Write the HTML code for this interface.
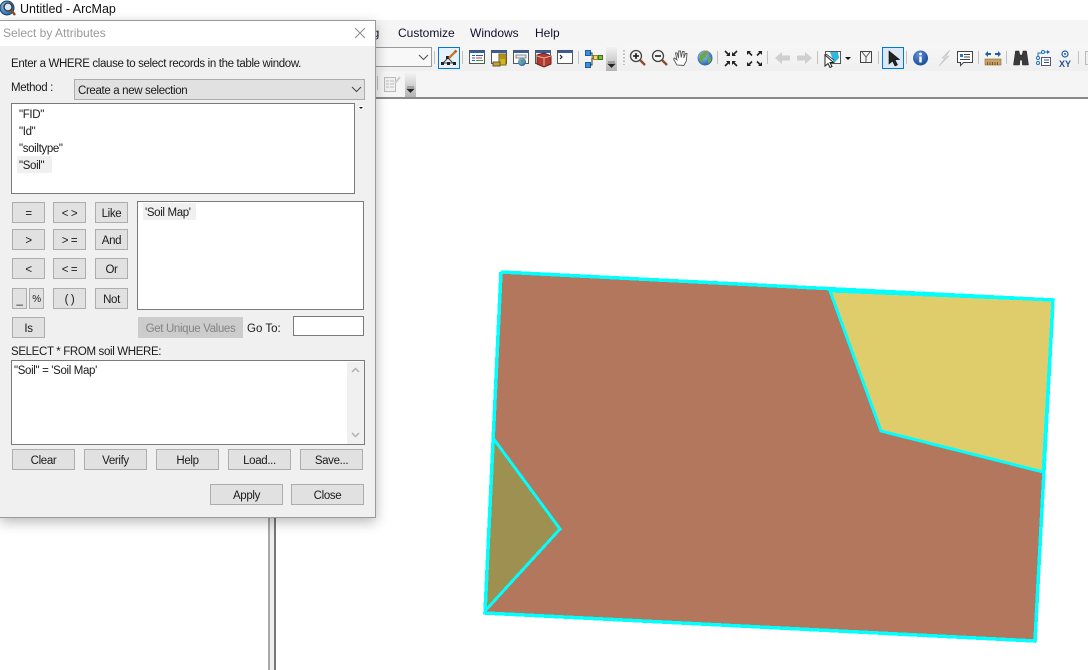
<!DOCTYPE html>
<html><head><meta charset="utf-8"><style>
html,body{margin:0;padding:0;background:#fff}
#p{position:relative;width:1088px;height:670px;overflow:hidden;background:#fff;font-family:"Liberation Sans",sans-serif;font-size:11.5px;letter-spacing:-.35px;color:#1a1a1a}
.t{position:absolute;white-space:pre;line-height:14px;transform:translateY(1px)}
.n{font-size:12px;letter-spacing:0;transform:none}
.b{position:absolute;box-sizing:border-box;padding-top:2px;background:#e1e1e1;border:1px solid #adadad;display:flex;align-items:center;justify-content:center;white-space:pre;line-height:14px}
.w{position:absolute;box-sizing:border-box;background:#fff;border:1px solid #7a7a7a}
.r{position:absolute}
svg{position:absolute;left:0;top:0}
</style></head><body><div id="p">

<!-- app chrome -->
<div class="r" style="left:0;top:20px;width:1088px;height:77px;background:#f5f5f5"></div>
<div class="r" style="left:380px;top:46px;width:708px;height:25px;background:linear-gradient(#f6f6f6,#efefef)"></div>
<div class="r" style="left:0;top:97px;width:1088px;height:2px;background:#8a8a8a"></div>
<div class="t n" style="left:20px;top:2px;font-size:12.5px;color:#111">Untitled - ArcMap</div>
<div class="t n" style="left:398px;top:26px;color:#101030">Customize</div>
<div class="t n" style="left:470px;top:26px;color:#101030">Windows</div>
<div class="t n" style="left:535px;top:26px;color:#101030">Help</div>
<div class="t n" style="left:366px;top:26px;color:#101030">ng</div>
<div class="r" style="left:370px;top:47px;width:62px;height:20px;box-sizing:border-box;border:1px solid #9a9a9a;border-left:0;background:#f8f8f8"></div>

<!-- map -->
<svg width="1088" height="670" viewBox="0 0 1088 670" shape-rendering="crispEdges">
<polygon points="501,272 1053,300 1035,641 485,613" fill="#b2775d"/>
<polygon points="830,291 1053,300 1043,472 881,431" fill="#dfcd6c" stroke="#00ffff" stroke-width="3"/>
<polygon points="493,438 560,529 485,611" fill="#9e9051" stroke="#00ffff" stroke-width="3"/>
<polyline points="501,272 1053,300 1035,641 485,613 501,272" fill="none" stroke="#00ffff" stroke-width="3.500"/>
</svg>

<!-- splitter -->
<div class="r" style="left:268px;top:510px;width:8px;height:160px;box-sizing:border-box;background:#eeeef0;border-left:2px solid #a8a8a8;border-right:2px solid #777"></div>

<!-- toolbar icons -->
<svg width="1088" height="100" viewBox="0 0 1088 100">
<defs>
<radialGradient id="gl" cx=".4" cy=".35" r=".7"><stop offset="0" stop-color="#9cc8ee"/><stop offset="1" stop-color="#1d5fa5"/></radialGradient>
<radialGradient id="inf" cx=".4" cy=".3" r=".8"><stop offset="0" stop-color="#5f92d8"/><stop offset="1" stop-color="#123f90"/></radialGradient>
<linearGradient id="ov" x1="0" y1="0" x2="0" y2="1"><stop offset="0" stop-color="#f2f2f2"/><stop offset="1" stop-color="#b4b4b4"/></linearGradient>
</defs>
<!-- app icon -->
<circle cx="7" cy="8" r="7" fill="url(#gl)" stroke="#16406c"/>
<path d="M3 6l4-3 3 2-2 4-3 1z" fill="#5aa04a"/>
<circle cx="8" cy="7" r="4" fill="#d7e8f4" stroke="#333" stroke-width="1.3"/>
<path d="M11 10l4 5" stroke="#8a4a1e" stroke-width="2.4"/>
<!-- combo chevron -->
<path d="M419 55l4.500 4.500 4.500-4.500" fill="none" stroke="#555" stroke-width="1.100"/>
<!-- separators -->
<g stroke="#c2c2c2" stroke-width="1">
<path d="M434.500 51v13M462.500 51v13M578.500 51v13M717.500 51v13M767.500 51v13M817.500 51v13M878.500 51v13M906.500 51v13M978.500 51v13M1006.500 51v13M1078.500 51v13M377.500 76v14"/>
</g>
<!-- edit tool -->
<rect x="438.500" y="47.500" width="21" height="21" fill="#e5f1fb" stroke="#0078d7"/>
<path d="M443 63l5-5 5 5M443 63h11" fill="none" stroke="#444"/>
<g fill="#222"><rect x="441" y="62" width="3" height="3"/><rect x="447" y="62" width="3" height="3"/><rect x="453" y="62" width="3" height="3"/><rect x="446" y="56" width="3" height="3"/></g>
<path d="M449 58l7-7" stroke="#c77b30" stroke-width="2.400"/><path d="M455 52l1.500-1.500" stroke="#d94040" stroke-width="2.400"/>
<!-- window icons -->
<g fill="#fff" stroke="#555"><rect x="469.500" y="50.500" width="15" height="13"/><rect x="491.500" y="50.500" width="15" height="13"/><rect x="513.500" y="50.500" width="15" height="13"/><rect x="535.500" y="50.500" width="15" height="13"/><rect x="557.500" y="50.500" width="15" height="13"/></g>
<g fill="#2f5fb0"><rect x="470" y="51" width="15" height="2"/><rect x="492" y="51" width="15" height="2"/><rect x="514" y="51" width="15" height="2"/><rect x="536" y="51" width="15" height="2"/><rect x="558" y="51" width="15" height="2"/></g>
<path d="M472 55.500h3M472 58h3M472 60.500h3" stroke="#1a5fc0"/><path d="M476 55.500h7" stroke="#1a5fc0"/><path d="M476 58h6" stroke="#d03030"/><path d="M476 60.500h7" stroke="#2ea04a"/>
<rect x="499" y="54" width="7" height="11" fill="#d8b21c" stroke="#7a6510"/><path d="M493 62h7v4h-7z" fill="#c9a51a" stroke="#555"/><path d="M500 56h5M500 58h5" stroke="#8a7010"/>
<rect x="516" y="55" width="10" height="3" fill="#e8e8e8" stroke="#888"/><circle cx="522" cy="62" r="4" fill="url(#gl)"/><path d="M520 61l2-2 2 2-2 2z" fill="#5aa04a"/>
<path d="M537 55l7-2 7 3v8l-7 3-7-3z" fill="#b23a30" stroke="#6a1f18"/><path d="M537 56l7 2 7-2M544 58v8" stroke="#e8b0a0" fill="none"/>
<path d="M560 55l2 2-2 2" fill="none" stroke="#222" stroke-width="1.200"/>
<!-- model builder -->
<rect x="585.500" y="50.500" width="5" height="5" fill="#3a8ee0" stroke="#1a5fa0"/><rect x="585.500" y="62.500" width="5" height="5" fill="#3a8ee0" stroke="#1a5fa0"/>
<rect x="593.500" y="55.500" width="4" height="4" fill="#f0d870" stroke="#a08a20"/><rect x="598.500" y="55.500" width="4" height="4" fill="#7ac040" stroke="#3a7020"/>
<path d="M590 53h2v3h1.500M590 65h2v-7h1.500" fill="none" stroke="#333"/>
<!-- overflow -->
<rect x="606" y="47" width="11" height="24" fill="url(#ov)"/>
<path d="M608 62h7M608 64h7l-3.500 3.500z" fill="#222" stroke="#222" stroke-width=".6"/>
<!-- grip -->
<path d="M624 50v15" stroke="#aaa" stroke-width="1.500" stroke-dasharray="1.500 2"/>
<!-- zoom in/out -->
<circle cx="636" cy="56" r="5.500" fill="#f4f4f4" stroke="#444" stroke-width="1.300"/><path d="M633 56h6M636 53v6" stroke="#111" stroke-width="1.500"/><path d="M640 60l5 5" stroke="#8a4a28" stroke-width="2.300"/>
<circle cx="658" cy="56" r="5.500" fill="#f4f4f4" stroke="#444" stroke-width="1.300"/><path d="M655 56h6" stroke="#111" stroke-width="1.500"/><path d="M662 60l5 5" stroke="#8a4a28" stroke-width="2.300"/>
<!-- hand -->
<path d="M677 65l-3.500-6 1-1 2.500 2-1.500-7h1.700l1.300 5 .3-7h1.700l.7 6.500 1.300-6h1.600l-.3 6.500 1.700-4.500h1.500l-.7 7.500-2.500 4.500z" fill="#fff" stroke="#555" stroke-width=".9"/>
<!-- globe -->
<circle cx="705" cy="58" r="7.500" fill="url(#gl)"/><path d="M700 55l4-3 3 1-1 4-3 2-1 4-2-3zM708 58l3-1 0 4-3 3z" fill="#6aaa3a"/><path d="M704 52l3 1 3-.5-3-2z" fill="#b08a3a"/>
<!-- fixed zoom -->
<g fill="#222"><path d="M725 51l4.500 4.500M737 51l-4.500 4.500M725 66l4.500-4.500M737 66l-4.500-4.500" stroke="#222" stroke-width="1.600"/><path d="M730 52v4h-4zM732 52v4h4zM730 65v-4h-4zM732 65v-4h4z"/></g>
<g fill="#222"><path d="M752 55.500l-3-3M757 55.500l3-3M752 61.500l-3 3M757 61.500l3 3" stroke="#222" stroke-width="1.600"/><path d="M747 51h4l-4 4zM762 51h-4l4 4zM747 66h4l-4-4zM762 66h-4l4-4z"/></g>
<!-- arrows -->
<path d="M775 58l7-6v3.500h8v5h-8v3.500z" fill="#cfcfcf"/>
<path d="M812 58l-7-6v3.500h-8v5h8v3.500z" fill="#cfcfcf"/>
<!-- select features -->
<rect x="825.500" y="51.500" width="15" height="12" fill="#fff" stroke="#555"/><path d="M830 52h8l1 6-5 5z" fill="#2fb8dc"/><path d="M826 54l8 6" stroke="#444"/>
<path d="M825 55v11l3-2.500 2 4 2-1-2-4h3.500z" fill="#fff" stroke="#222"/>
<path d="M845 57h6l-3 3z" fill="#111"/>
<!-- clear sel -->
<rect x="860.500" y="51.500" width="11" height="11" fill="#f4f4f4" stroke="#444"/><path d="M862 52l4 5 4-5M866 57v5" fill="none" stroke="#555"/>
<!-- cursor -->
<rect x="882.500" y="47.500" width="21" height="21" fill="#dce9f5" stroke="#0078d7"/>
<path d="M889 51l0 13 3.500-3 2.500 5 2.500-1.200-2.500-5 4.500-.3z" fill="#222" stroke="#111" stroke-width=".6"/>
<!-- info -->
<circle cx="920.500" cy="58" r="7.500" fill="url(#inf)"/><rect x="919.300" y="56.500" width="2.400" height="6" fill="#fff"/><circle cx="920.500" cy="54" r="1.400" fill="#fff"/>
<!-- lightning -->
<path d="M950 50l-8 8h3l-6 8 10-10h-3l4-6z" fill="#d8d8d8" stroke="#c4c4c4" stroke-width=".6"/>
<!-- callout -->
<path d="M957.500 51.500h15v11h-9l-3 3v-3h-3z" fill="#fff" stroke="#444"/><rect x="960" y="54" width="3" height="3" fill="#2878c8"/><path d="M964 54.500h6M964 57h6M960 59.500h10" stroke="#444" stroke-width=".9"/>
<!-- ruler -->
<path d="M985 54l3-3v2h3v2h-3v2zM1001 54l-3-3v2h-3v2h3v2z" fill="#1f5fa8"/>
<rect x="985" y="59" width="16" height="6" fill="#c9a468" stroke="#8a6a30" stroke-width=".6"/><path d="M987.500 62v3M990 62v3M992.500 62v3M995 62v3M997.500 62v3" stroke="#5a4010" stroke-width=".7"/>
<!-- binoculars -->
<path d="M1015.500 51h3.500l.8 4h2.400l.8-4h3.500l2 14h-6l-.5-5h-2l-.5 5h-6z" fill="#3b3b3b" stroke="#222" stroke-width=".5"/>
<!-- model query -->
<rect x="1041.500" y="57.500" width="9" height="8" fill="#fff" stroke="#557"/><path d="M1044 60h5M1044 62.500h5" stroke="#357"/>
<g fill="#fff" stroke="#1f6fb8"><circle cx="1038" cy="58" r="1.500"/><circle cx="1038" cy="63" r="1.500"/><circle cx="1043" cy="52" r="1.500"/></g><path d="M1038 56v-3h4M1045 52h4" fill="none" stroke="#1f6fb8"/><path d="M1047 50l3 2-3 2z" fill="#1f6fb8"/>
<!-- XY -->
<circle cx="1065" cy="54" r="3" fill="none" stroke="#1f5fa8" stroke-width="1.200"/><circle cx="1065" cy="54" r="1" fill="#1f5fa8"/>
<text x="1059" y="67" font-family="Liberation Sans" font-size="9" font-weight="bold" fill="#1f4f98" textLength="12" letter-spacing="0">XY</text>
<rect x="1085.500" y="51.500" width="6" height="13" fill="#eee" stroke="#bbb"/>
<!-- row 2 -->
<rect x="384.500" y="77.500" width="11" height="14" fill="#f0f0f0" stroke="#bbb"/><path d="M386 81h3M386 84h3M386 87h3M390 81h4M390 84h4M390 87h4" stroke="#bbb"/><path d="M395 83l5-6" stroke="#ccc" stroke-width="2"/>
<rect x="405" y="73" width="11" height="24" fill="url(#ov)"/>
<path d="M407 87h7M407 89h7l-3.500 3.500z" fill="#222" stroke="#222" stroke-width=".6"/>
</svg>

<!-- dialog -->
<div class="r" style="left:0;top:20px;width:376px;height:498px;box-sizing:border-box;background:#f0f0f0;border:1px solid #9a9a9a;border-left:0;box-shadow:0 4px 12px rgba(0,0,0,.28)"></div>
<div class="r" style="left:0;top:21px;width:375px;height:25px;background:#fff"></div>
<div class="t n" style="left:3px;top:26px;color:#999">Select by Attributes</div>
<svg width="376" height="50" viewBox="0 0 376 50"><path d="M355 28l10 10M365 28l-10 10" stroke="#8a8a8a" stroke-width="1"/></svg>
<div class="t" style="left:11px;top:56px">Enter a WHERE clause to select records in the table window.</div>
<div class="t" style="left:11px;top:80px">Method :</div>
<div class="r" style="left:74px;top:79px;width:291px;height:21px;box-sizing:border-box;background:#e1e1e1;border:1px solid #adadad"></div>
<div class="t" style="left:78px;top:83px">Create a new selection</div>
<svg width="376" height="112" viewBox="0 0 376 112"><path d="M352 87l4.500 4.500 4.500-4.500" fill="none" stroke="#444"/><rect x="358" y="105" width="6" height="5" fill="#fff" stroke="#ddd" stroke-width=".5"/><path d="M359 107h4l-2 2z" fill="#111"/></svg>

<div class="w" style="left:11px;top:103px;width:344px;height:91px"></div>
<div class="r" style="left:17px;top:156px;width:35px;height:17px;background:#f0f0f0"></div>
<div class="t" style="left:19px;top:107px">"FID"</div>
<div class="t" style="left:19px;top:124px">"Id"</div>
<div class="t" style="left:19px;top:141px">"soiltype"</div>
<div class="t" style="left:19px;top:158px">"Soil"</div>

<div class="b" style="left:12px;top:202px;width:33px;height:21px">=</div>
<div class="b" style="left:53px;top:202px;width:33px;height:21px">&lt; &gt;</div>
<div class="b" style="left:95px;top:202px;width:33px;height:21px">Like</div>
<div class="b" style="left:12px;top:229px;width:33px;height:21px">&gt;</div>
<div class="b" style="left:53px;top:229px;width:33px;height:21px">&gt; =</div>
<div class="b" style="left:95px;top:229px;width:33px;height:21px">And</div>
<div class="b" style="left:12px;top:258px;width:33px;height:21px">&lt;</div>
<div class="b" style="left:53px;top:258px;width:33px;height:21px">&lt; =</div>
<div class="b" style="left:95px;top:258px;width:33px;height:21px">Or</div>
<div class="b" style="left:12px;top:288px;width:15px;height:21px">_</div>
<div class="b" style="left:29px;top:288px;width:15px;height:21px;font-size:10px">%</div>
<div class="b" style="left:53px;top:288px;width:33px;height:21px">( )</div>
<div class="b" style="left:95px;top:288px;width:33px;height:21px">Not</div>
<div class="b" style="left:12px;top:317px;width:33px;height:21px">Is</div>

<div class="w" style="left:137px;top:201px;width:227px;height:109px"></div>
<div class="r" style="left:143px;top:203px;width:53px;height:17px;background:#f0f0f0"></div>
<div class="t" style="left:145px;top:205px">'Soil Map'</div>

<div class="b" style="left:138px;top:317px;width:105px;height:21px;background:#ccc;border-color:#ccc;color:#838383">Get Unique Values</div>
<div class="t" style="left:247px;top:321px;letter-spacing:0">Go To:</div>
<div class="w" style="left:293px;top:316px;width:71px;height:20px"></div>

<div class="t" style="left:11px;top:344px">SELECT * FROM soil WHERE:</div>
<div class="w" style="left:11px;top:360px;width:354px;height:85px"></div>
<div class="r" style="left:347px;top:362px;width:17px;height:82px;background:#f0f0f0"></div>
<svg width="376" height="445" viewBox="0 0 376 445"><path d="M352 372l3.500-3.500 3.500 3.500M352 433l3.500 3.500 3.500-3.500" fill="none" stroke="#b0b0b0" stroke-width="1.500"/></svg>
<div class="t" style="left:14px;top:363px">"Soil" = 'Soil Map'</div>

<div class="b" style="left:12px;top:449px;width:63px;height:21px">Clear</div>
<div class="b" style="left:84px;top:449px;width:63px;height:21px">Verify</div>
<div class="b" style="left:156px;top:449px;width:63px;height:21px">Help</div>
<div class="b" style="left:228px;top:449px;width:63px;height:21px">Load...</div>
<div class="b" style="left:300px;top:449px;width:63px;height:21px">Save...</div>
<div class="b" style="left:210px;top:484px;width:73px;height:21px">Apply</div>
<div class="b" style="left:291px;top:484px;width:73px;height:21px">Close</div>

</div></body></html>
